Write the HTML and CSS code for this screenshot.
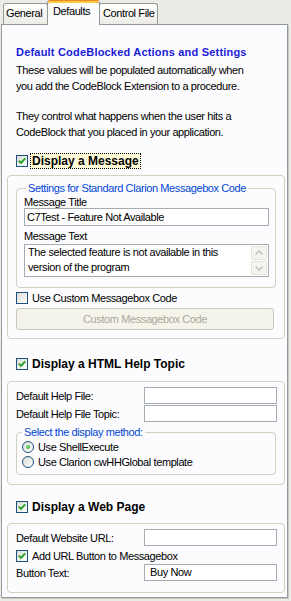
FILE: index.html
```html
<html>
<head>
<meta name="viewport" content="width=device-width, initial-scale=1.0">
<link rel="stylesheet" href="styles.css">
</head>
<body>

<div class="window">

    <div class="tabs">
        <div class="tab tab-general">General</div>
        <div class="tab tab-active">Defaults</div>
        <div class="tab tab-control">Control File</div>
    </div>

    <div class="panel">

        <div class="intro">
            <div class="heading">Default CodeBlocked Actions and Settings</div>
            <p>These values will be populated automatically when<br>you add the CodeBlock Extension to a procedure.</p>
            <p class="second">They control what happens when the user hits a<br>CodeBlock that you placed in your application.</p>
        </div>

        <!-- message -->
        <div class="check main row-message">
            <span class="box"><svg width="10" height="10" viewBox="0 0 10 10"><polyline points="1.8,4.6 4,6.8 8.2,2.4" fill="none" stroke="#21a121" stroke-width="1.9"/></svg></span>
            <span class="cap focus">Display a Message</span>
        </div>

        <div class="group group-message">
            <fieldset class="sub sub-message">
                <legend>Settings for Standard Clarion Messagebox Code</legend>
                <div class="lbl lbl-title">Message Title</div>
                <div class="field wide">C7Test - Feature Not Available</div>
                <div class="lbl lbl-text">Message Text</div>
                <div class="memo">
                    <div class="memo-text">The selected feature is not available in this<br>version of the program</div>
                    <div class="scroll">
                        <div class="sbtn"><svg width="14" height="12" viewBox="0 0 14 12"><polyline points="3.5,7.5 7,4 10.5,7.5" fill="none" stroke="#c4c4bc" stroke-width="1.6"/></svg></div>
                        <div class="sbtn"><svg width="14" height="12" viewBox="0 0 14 12"><polyline points="3.5,4.5 7,8 10.5,4.5" fill="none" stroke="#c4c4bc" stroke-width="1.6"/></svg></div>
                    </div>
                </div>
            </fieldset>

            <div class="check row-custom">
                <span class="box"></span>
                <span class="cap">Use Custom Messagebox Code</span>
            </div>
            <div class="button">Custom Messagebox Code</div>
        </div>

        <!-- help -->
        <div class="check main row-help">
            <span class="box"><svg width="10" height="10" viewBox="0 0 10 10"><polyline points="1.8,4.6 4,6.8 8.2,2.4" fill="none" stroke="#21a121" stroke-width="1.9"/></svg></span>
            <span class="cap">Display a HTML Help Topic</span>
        </div>

        <div class="group group-help">
            <div class="frow frow-first">
                <span>Default Help File:</span>
                <div class="field short"></div>
            </div>
            <div class="frow">
                <span>Default Help File Topic:</span>
                <div class="field short"></div>
            </div>
            <fieldset class="sub sub-method">
                <legend>Select the display method:</legend>
                <div class="radio-row first">
                    <span class="radio on"></span>
                    <span>Use ShellExecute</span>
                </div>
                <div class="radio-row">
                    <span class="radio"></span>
                    <span>Use Clarion cwHHGlobal template</span>
                </div>
            </fieldset>
        </div>

        <!-- web page -->
        <div class="check main row-web">
            <span class="box"><svg width="10" height="10" viewBox="0 0 10 10"><polyline points="1.8,4.6 4,6.8 8.2,2.4" fill="none" stroke="#21a121" stroke-width="1.9"/></svg></span>
            <span class="cap">Display a Web Page</span>
        </div>

        <div class="group group-web">
            <div class="frow frow-first">
                <span>Default Website URL:</span>
                <div class="field short"></div>
            </div>
            <div class="check row-url">
                <span class="box"><svg width="10" height="10" viewBox="0 0 10 10"><polyline points="1.8,4.6 4,6.8 8.2,2.4" fill="none" stroke="#21a121" stroke-width="1.9"/></svg></span>
                <span class="cap">Add URL Button to Messagebox</span>
            </div>
            <div class="frow">
                <span>Button Text:</span>
                <div class="field short buy">Buy Now</div>
            </div>
        </div>

    </div>
</div>

</body>
</html>
```

FILE: styles.css
```css
body, html {
    margin: 0;
    padding: 0;
    background: #ecebe6;
    font-family: "Liberation Sans", Arial, sans-serif;
    font-size: 11px;
    letter-spacing: -0.4px;
    color: #000;
}

.window {
    width: 291px;
    height: 601px;
}

/* tabs */

.tabs {
    display: flex;
    align-items: flex-end;
    height: 24px;
    padding-left: 3px;
}

.tab {
    box-sizing: border-box;
    height: 21px;
    line-height: 18px;
    border: 1px solid #919b9c;
    border-bottom: none;
    border-radius: 3px 3px 0 0;
    background: linear-gradient(#ffffff, #ecebe5);
    white-space: nowrap;
}

.tab-general {
    width: 45px;
    padding-left: 2px;
}

.tab-active {
    width: 53px;
    height: 25px;
    margin: 0 0 -1px -1px;
    padding-left: 5px;
    line-height: 20px;
    border-top-color: #e68b2c;
    background: #fcfcfe;
    box-shadow: inset 0 2px 0 #ffc73c;
    position: relative;
    z-index: 1;
}

.tab-control {
    width: 59px;
    margin-left: -1px;
    padding-left: 3px;
}

/* page */

.panel {
    margin-left: 1px;
    width: 285px;
    padding-bottom: 4px;
    border: 1px solid #919b9c;
    background: #fcfcfe;
    box-shadow: 1px 1px 0 #c9c8c0;
}

.intro {
    padding: 0 14px;
}

.heading {
    margin-top: 19px;
    line-height: 16px;
    font-weight: bold;
    letter-spacing: 0.2px;
    color: #1a1ad8;
    white-space: nowrap;
}

.intro p {
    margin: 2px 0 0;
    line-height: 16px;
    white-space: nowrap;
}

.intro p.second {
    margin-top: 14px;
}

/* checkboxes */

.check {
    display: flex;
    align-items: center;
    height: 16px;
    white-space: nowrap;
}

.check.main {
    margin-left: 14px;
    font-size: 12px;
    font-weight: bold;
    letter-spacing: 0;
}

.box {
    width: 10px;
    height: 10px;
    border: 1px solid #1c5180;
    background: linear-gradient(135deg, #dcdcd5, #ffffff);
    flex: none;
}

.box svg {
    display: block;
}

.cap {
    margin-left: 2px;
    padding: 0 1px;
    line-height: 14px;
    border: 1px dotted transparent;
}

.cap.focus {
    border-color: #000;
    background: #fffbd8;
}

.row-message {
    margin-top: 13px;
}

.row-help {
    margin-top: 17px;
}

.row-web {
    margin-top: 14px;
}

.row-custom {
    margin-top: 2px;
}

.row-url {
    height: 14px;
    margin-top: 3px;
}

/* group boxes */

.group {
    margin: 6px 2px 0 5px;
    padding: 0 8px;
    border: 1px solid #d0d0bf;
    border-radius: 4px;
}

.group-message {
    padding-bottom: 8px;
}

.group-help {
    margin-top: 9px;
    padding-bottom: 9px;
}

.group-web {
    margin-top: 8px;
    padding-bottom: 11px;
}

fieldset.sub {
    margin: 6px 0 0;
    min-width: 0;
    border: 1px solid #d0d0bf;
    border-radius: 4px;
}

fieldset.sub legend {
    padding: 0 2px;
    line-height: 12px;
    color: #0046d5;
    white-space: nowrap;
}

.sub-message {
    padding: 0 6px 10px 7px;
}

.sub-message legend {
    margin-left: 2px;
}

.sub-method {
    padding: 0 6px 5px 5px;
}

.sub-method {
    margin-top: 4px !important;
}

.lbl {
    line-height: 12px;
}

.lbl-title {
    margin-top: 2px;
}

.lbl-text {
    margin-top: 4px;
}

/* fields */

.field {
    box-sizing: border-box;
    height: 18px;
    line-height: 16px;
    padding: 0 2px;
    border: 1px solid #a5acb2;
    background: #fff;
    white-space: nowrap;
}

.field.short {
    width: 133px;
    height: 17px;
    line-height: 15px;
    margin-left: auto;
    margin-right: -1px;
}

.field.buy {
    padding-left: 5px;
}

.memo {
    display: flex;
    box-sizing: border-box;
    height: 33px;
    margin-top: 2px;
    border: 1px solid #a5acb2;
    background: #fff;
}

.memo-text {
    flex: 1;
    padding-left: 3px;
    line-height: 15px;
    white-space: nowrap;
}

.scroll {
    display: flex;
    flex-direction: column;
    gap: 1px;
    padding: 1px;
    width: 16px;
}

.sbtn {
    box-sizing: border-box;
    height: 14px;
    display: flex;
    align-items: center;
    justify-content: center;
    border: 1px solid #e4e4dc;
    border-radius: 2px;
    background: #f4f4f0;
}

.button {
    box-sizing: border-box;
    width: 258px;
    height: 22px;
    margin-top: 2px;
    line-height: 20px;
    text-align: center;
    color: #aca899;
    border: 1px solid #c9c7ba;
    border-radius: 3px;
    background: #f5f4ea;
}

.frow {
    display: flex;
    align-items: center;
    margin-top: 1px;
    white-space: nowrap;
}

.frow-first {
    margin-top: 5px;
}

/* radios */

.radio-row {
    display: flex;
    align-items: center;
    height: 15px;
    gap: 4px;
    white-space: nowrap;
}

.radio-row.first {
    margin-top: 1px;
}

.radio {
    box-sizing: border-box;
    width: 12px;
    height: 12px;
    border: 1px solid #1c5180;
    border-radius: 50%;
    background: linear-gradient(135deg, #dcdcd5, #ffffff);
    display: flex;
    align-items: center;
    justify-content: center;
    flex: none;
}

.radio.on::after {
    content: "";
    width: 4px;
    height: 4px;
    border-radius: 50%;
    background: radial-gradient(circle at 35% 35%, #8be08b, #21a121);
}
```
